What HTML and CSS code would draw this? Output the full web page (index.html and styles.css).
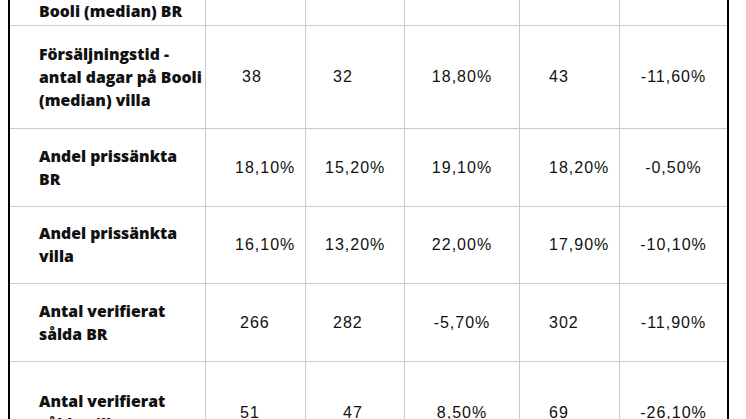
FILE: index.html
```html
<!DOCTYPE html>
<html lang="sv">
<head>
<meta charset="utf-8">
<title>Bostadsstatistik</title>
<link rel="stylesheet" href="styles.css">
</head>
<body>
<table class="grid">
  <colgroup>
    <col class="c1"><col class="c2"><col class="c3"><col class="c4"><col class="c5"><col class="c6">
  </colgroup>
  <tbody>
    <tr class="r0">
      <td class="lbl">Booli (median) BR</td>
      <td></td><td></td><td></td><td></td><td></td>
    </tr>
    <tr class="r1">
      <td class="lbl">Försäljningstid -<br>antal dagar på Booli<br>(median) villa</td>
      <td class="num pl36">38</td>
      <td class="num pl27">32</td>
      <td class="num ctr">18,80%</td>
      <td class="num pl29">43</td>
      <td class="num ctr">-11,60%</td>
    </tr>
    <tr class="r2">
      <td class="lbl">Andel prissänkta<br>BR</td>
      <td class="num pl29">18,10%</td>
      <td class="num pl19">15,20%</td>
      <td class="num ctr">19,10%</td>
      <td class="num pl29">18,20%</td>
      <td class="num ctr">-0,50%</td>
    </tr>
    <tr class="r3">
      <td class="lbl">Andel prissänkta<br>villa</td>
      <td class="num pl29">16,10%</td>
      <td class="num pl19">13,20%</td>
      <td class="num ctr">22,00%</td>
      <td class="num pl29">17,90%</td>
      <td class="num ctr">-10,10%</td>
    </tr>
    <tr class="r4">
      <td class="lbl">Antal verifierat<br>sålda BR</td>
      <td class="num pl34">266</td>
      <td class="num pl27">282</td>
      <td class="num ctr">-5,70%</td>
      <td class="num pl29">302</td>
      <td class="num ctr">-11,90%</td>
    </tr>
    <tr class="r5">
      <td class="lbl">Antal verifierat<br>sålda villa</td>
      <td class="num pl34">51</td>
      <td class="num pl37">47</td>
      <td class="num ctr">8,50%</td>
      <td class="num pl29">69</td>
      <td class="num ctr">-26,10%</td>
    </tr>
  </tbody>
</table>
</body>
</html>
```
FILE: styles.css
```css
html, body {
  overflow: hidden;
  background: #ffffff;
}
body {
  margin: 0 0 0 8px;
  width: 738px;
  height: 419px;
}
.grid {
  border-collapse: separate;
  border-spacing: 0;
  table-layout: fixed;
  width: 721px;
  margin-top: -40px;
  border-left: 2px solid #000;
  border-right: 2px solid #000;
  color: #000;
}
.c1 { width: 196px; }
.c2 { width: 100px; }
.c3 { width: 99px; }
.c4 { width: 115px; }
.c5 { width: 100px; }
.c6 { width: 107px; }

.grid td {
  box-sizing: border-box;
  padding: 0;
  border-right: 1px solid #cbcbcb;
  border-bottom: 1px solid #cbcbcb;
  vertical-align: middle;
  white-space: nowrap;
}
.grid td:last-child {
  border-right: none;
}
.r0 td { height: 66px; vertical-align: bottom; padding-bottom: 2px; }
.r1 td { height: 103px; }
.r2 td { height: 78px; }
.r3 td { height: 77px; }
.r4 td { height: 78px; }
.r5 td { height: 102px; }

.grid td.lbl {
  font-family: "Open Sans", "DejaVu Sans", sans-serif;
  font-weight: 800;
  font-size: 15.8px;
  line-height: 23px;
  padding-left: 29px;
  color: #111;
}
.r0 td.lbl { padding-bottom: 2px; }

.grid td.num {
  font-family: "Liberation Sans", Arial, sans-serif;
  font-size: 16px;
  line-height: 20px;
  letter-spacing: 1px;
  color: #111;
}
.grid td.ctr { text-align: center; }
.grid td.pl19 { padding-left: 19px; }
.grid td.pl27 { padding-left: 27px; }
.grid td.pl29 { padding-left: 29px; }
.grid td.pl34 { padding-left: 34px; }
.grid td.pl36 { padding-left: 36px; }
.grid td.pl37 { padding-left: 37px; }
```
